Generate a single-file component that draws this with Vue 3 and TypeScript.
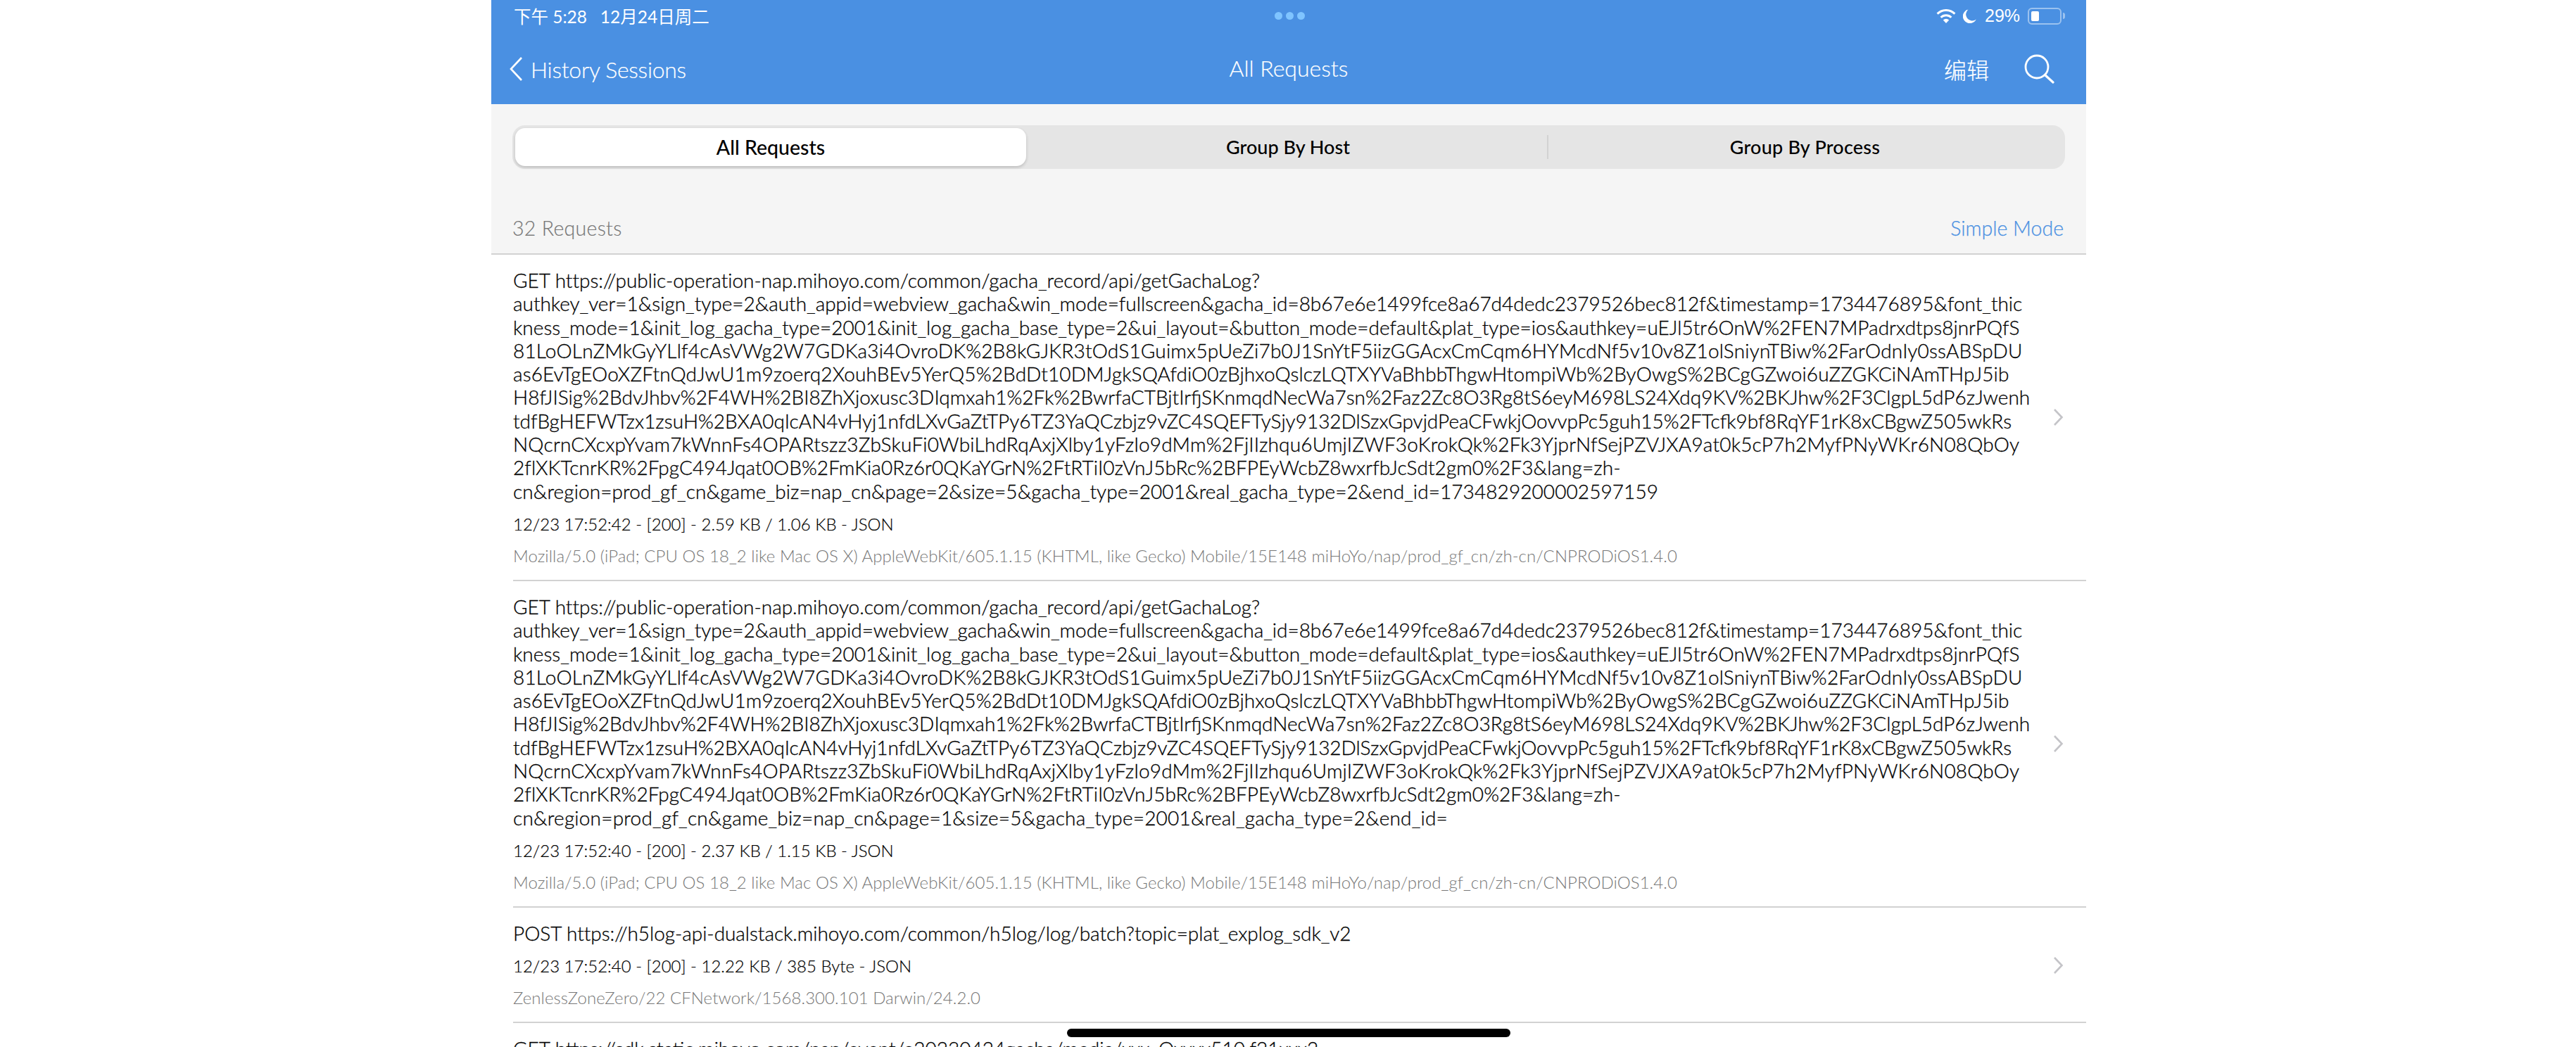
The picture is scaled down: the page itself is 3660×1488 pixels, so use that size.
<script setup lang="ts">
interface Line { t: string; ls: number }
interface Req { lines: Line[]; meta: string; ua: string }

const mid: Line[] = [
  { t: 'authkey_ver=1&sign_type=2&auth_appid=webview_gacha&win_mode=fullscreen&gacha_id=8b67e6e1499fce8a67d4dedc2379526bec812f&timestamp=1734476895&font_thic', ls: -0.02 },
  { t: 'kness_mode=1&init_log_gacha_type=2001&init_log_gacha_base_type=2&ui_layout=&button_mode=default&plat_type=ios&authkey=uEJl5tr6OnW%2FEN7MPadrxdtps8jnrPQfS', ls: 0.03 },
  { t: '81LoOLnZMkGyYLlf4cAsVWg2W7GDKa3i4OvroDK%2B8kGJKR3tOdS1Guimx5pUeZi7b0J1SnYtF5iizGGAcxCmCqm6HYMcdNf5v10v8Z1olSniynTBiw%2FarOdnIy0ssABSpDU', ls: 0.19 },
  { t: 'as6EvTgEOoXZFtnQdJwU1m9zoerq2XouhBEv5YerQ5%2BdDt10DMJgkSQAfdiO0zBjhxoQslczLQTXYVaBhbbThgwHtompiWb%2ByOwgS%2BCgGZwoi6uZZGKCiNAmTHpJ5ib', ls: 0.12 },
  { t: 'H8fJISig%2BdvJhbv%2F4WH%2BI8ZhXjoxusc3DIqmxah1%2Fk%2BwrfaCTBjtIrfjSKnmqdNecWa7sn%2Faz2Zc8O3Rg8tS6eyM698LS24Xdq9KV%2BKJhw%2F3ClgpL5dP6zJwenh', ls: 0 },
  { t: 'tdfBgHEFWTzx1zsuH%2BXA0qIcAN4vHyj1nfdLXvGaZtTPy6TZ3YaQCzbjz9vZC4SQEFTySjy9132DlSzxGpvjdPeaCFwkjOovvpPc5guh15%2FTcfk9bf8RqYF1rK8xCBgwZ505wkRs', ls: 0 },
  { t: 'NQcrnCXcxpYvam7kWnnFs4OPARtszz3ZbSkuFi0WbiLhdRqAxjXlby1yFzIo9dMm%2FjIIzhqu6UmjIZWF3oKrokQk%2Fk3YjprNfSejPZVJXA9at0k5cP7h2MyfPNyWKr6N08QbOy', ls: 0.19 },
  { t: '2flXKTcnrKR%2FpgC494Jqat0OB%2FmKia0Rz6r0QKaYGrN%2FtRTiI0zVnJ5bRc%2BFPEyWcbZ8wxrfbJcSdt2gm0%2F3&lang=zh-', ls: 0.07 },
]
const head: Line = { t: 'GET https://public-operation-nap.mihoyo.com/common/gacha_record/api/getGachaLog?', ls: -0.03 }
const ipadUa = 'Mozilla/5.0 (iPad; CPU OS 18_2 like Mac OS X) AppleWebKit/605.1.15 (KHTML, like Gecko) Mobile/15E148 miHoYo/nap/prod_gf_cn/zh-cn/CNPRODiOS1.4.0'

const requests: Req[] = [
  {
    lines: [head, ...mid, { t: 'cn&region=prod_gf_cn&game_biz=nap_cn&page=2&size=5&gacha_type=2001&real_gacha_type=2&end_id=1734829200002597159', ls: 0.08 }],
    meta: '12/23 17:52:42 - [200] - 2.59 KB / 1.06 KB - JSON',
    ua: ipadUa,
  },
  {
    lines: [head, ...mid, { t: 'cn&region=prod_gf_cn&game_biz=nap_cn&page=1&size=5&gacha_type=2001&real_gacha_type=2&end_id=', ls: 0.2 }],
    meta: '12/23 17:52:40 - [200] - 2.37 KB / 1.15 KB - JSON',
    ua: ipadUa,
  },
  {
    lines: [{ t: 'POST https://h5log-api-dualstack.mihoyo.com/common/h5log/log/batch?topic=plat_explog_sdk_v2', ls: -0.05 }],
    meta: '12/23 17:52:40 - [200] - 12.22 KB / 385 Byte - JSON',
    ua: 'ZenlessZoneZero/22 CFNetwork/1568.300.101 Darwin/24.2.0',
  },
  {
    lines: [{ t: 'GET https://sdk.static.mihoyo.com/nap/event/e20230424gacha/media/xxx_Oxxxx510.f21xxx2', ls: 0 }],
    meta: '',
    ua: '',
  },
]
const tabs = ['All Requests', 'Group By Host', 'Group By Process']
</script>

<template>
  <div class="app">
    <header class="bar">
      <div class="status">
        <span class="clock">下午 5:28&nbsp;&nbsp;&nbsp;12月24日周二</span>
        <span class="dots"><i></i><i></i><i></i></span>
        <span class="sys">
          <svg class="wifi" width="28" height="20" viewBox="0 0 28 20">
            <path d="M14 20l-4.2-4.6a6 6 0 0 1 8.4 0z" fill="#fff" />
            <path d="M6.6 11.8a10.6 10.6 0 0 1 14.8 0" fill="none" stroke="#fff" stroke-width="3" />
            <path d="M1.6 6.6a17.6 17.6 0 0 1 24.8 0" fill="none" stroke="#fff" stroke-width="3" />
          </svg>
          <svg class="moon" width="19" height="20" viewBox="0 0 19 20">
            <path d="M7.6 0.4A10 10 0 1 0 18.8 14.6 9 9 0 0 1 7.6 0.4z" fill="#fff" />
          </svg>
          <span class="pct">29%</span>
          <span class="battery"><b></b></span>
          <span class="nub"></span>
        </span>
      </div>
      <nav class="nav">
        <div class="back">
          <svg width="22" height="36" viewBox="0 0 22 36">
            <path d="M19 2L4 18l15 16" fill="none" stroke="#fff" stroke-width="2.6" />
          </svg>
          <span>History Sessions</span>
        </div>
        <div class="title">All Requests</div>
        <div class="actions">
          <span class="edit">编辑</span>
          <svg width="44" height="42" viewBox="0 0 44 42">
            <circle cx="18" cy="18" r="16" fill="none" stroke="#fff" stroke-width="2.8" />
            <path d="M29.5 29.5L41 40" fill="none" stroke="#fff" stroke-width="3.2" stroke-linecap="round" />
          </svg>
        </div>
      </nav>
    </header>

    <section class="controls">
      <div class="segments">
        <div v-for="(t, i) in tabs" :key="t" class="seg" :class="{ on: i === 0, rule: i === 2, nudge: i === 1 }">{{ t }}</div>
      </div>
    </section>

    <div class="summary">
      <span class="count">32 Requests</span>
      <span class="mode">Simple Mode</span>
    </div>

    <ul class="list">
      <li v-for="(r, i) in requests" :key="i" class="row">
        <div class="body">
          <div class="url">
            <div v-for="(l, j) in r.lines" :key="j" :style="{ letterSpacing: l.ls + 'px' }">{{ l.t }}</div>
          </div>
          <div v-if="r.meta" class="meta">{{ r.meta }}</div>
          <div v-if="r.ua" class="ua">{{ r.ua }}</div>
        </div>
        <svg v-if="r.meta" class="chev" width="15" height="24" viewBox="0 0 15 24">
          <path d="M2 1L12.5 12 2 23" fill="none" stroke="#c4c4c8" stroke-width="2.6" />
        </svg>
      </li>
    </ul>

    <div class="home"></div>
  </div>
</template>

<style>
html, body { margin: 0; background: #fff; overflow: hidden; }
</style>

<style scoped>
.app {
  position: relative;
  width: 2266px;
  height: 1488px;
  margin-left: 698px;
  overflow: hidden;
  background: #f5f5f5;
  font-family: Lato, "Noto Sans CJK SC", sans-serif;
  color: #000;
}
.bar { background: #4a90e2; height: 148px; color: #fff; }
.status {
  height: 48px;
  padding: 0 30px 3px 32px;
  box-sizing: border-box;
  display: grid;
  grid-template-columns: 1fr auto 1fr;
  align-items: center;
  font-size: 24.5px;
}
.dots { display: flex; gap: 5px; }
.dots i { width: 11px; height: 11px; border-radius: 50%; background: #7fc4ff; }
.sys { display: flex; align-items: center; justify-content: flex-end; }
.moon { margin-left: 10px; }
.pct { margin-left: 12px; width: 52px; font-size: 25px; font-family: "Liberation Sans", sans-serif; }
.battery {
  margin-left: 9px;
  box-sizing: border-box;
  width: 48px;
  height: 24px;
  border: 2px solid rgba(255, 255, 255, .45);
  border-radius: 6px;
  padding: 3px;
  display: flex;
}
.battery b { width: 11px; background: #fff; border-radius: 2px; }
.nub { width: 3px; height: 9px; margin-left: 2px; background: rgba(255, 255, 255, .45); border-radius: 0 3px 3px 0; }
.nav {
  height: 100px;
  padding: 0 44px;
  display: grid;
  grid-template-columns: 1fr auto 1fr;
  align-items: center;
  font-size: 32px;
  font-weight: 300;
  -webkit-text-stroke: .2px #fff;
}
.back { display: flex; align-items: center; gap: 10px; margin-left: -20px; letter-spacing: -.3px; }
.title { padding-bottom: 3px; }
.actions { display: flex; justify-content: flex-end; align-items: center; gap: 50px; }
.controls { padding: 30px 30px 0; }
.segments {
  height: 62px;
  background: #e5e5e5;
  border-radius: 18px;
  padding: 4px;
  box-sizing: border-box;
  display: grid;
  grid-template-columns: 726px 741px 1fr;
  font-size: 27px;
  font-weight: 500;
}
.seg { display: flex; align-items: center; justify-content: center; position: relative; padding-bottom: 1px; }
.seg.nudge { padding-left: 3px; }
.seg.on {
  background: #fff;
  border-radius: 14px;
  box-shadow: 0 2px 4px rgba(0, 0, 0, .18);
  font-size: 28.5px;
}
.seg.rule { letter-spacing: .22px; }
.seg.rule::before {
  content: "";
  position: absolute;
  left: -1px;
  top: 10px;
  bottom: 10px;
  width: 2px;
  background: #d2d2d2;
}
.summary {
  height: 122px;
  padding: 0 32px 19px 30px;
  box-sizing: border-box;
  display: flex;
  justify-content: space-between;
  align-items: flex-end;
  font-size: 28.5px;
  font-weight: 300;
  color: #777;
  border-bottom: 2px solid #d2d2d2;
}
.count { letter-spacing: .3px; -webkit-text-stroke: .15px #777; }
.mode { color: #4a90e2; -webkit-text-stroke: .25px #4a90e2; }
.list { list-style: none; margin: 0; padding: 0; background: #fff; }
.row {
  display: flex;
  align-items: center;
  margin-left: 31px;
  padding: 20px 32px 19px 0;
  border-bottom: 2px solid #d2d2d2;
}
.body { flex: 1; min-width: 0; }
.url { font-size: 28px; line-height: 33.3px; white-space: nowrap; font-weight: 300; -webkit-text-stroke: .3px #000; }
.meta { margin-top: 15px; font-size: 24px; line-height: 30px; font-weight: 300; -webkit-text-stroke: .2px #000; }
.ua { margin-top: 15px; font-size: 24px; line-height: 30px; font-weight: 300; letter-spacing: .05px; color: #777; }
.home {
  position: absolute;
  left: 818px;
  top: 1462px;
  width: 630px;
  height: 12px;
  border-radius: 6px;
  background: #000;
}
</style>
